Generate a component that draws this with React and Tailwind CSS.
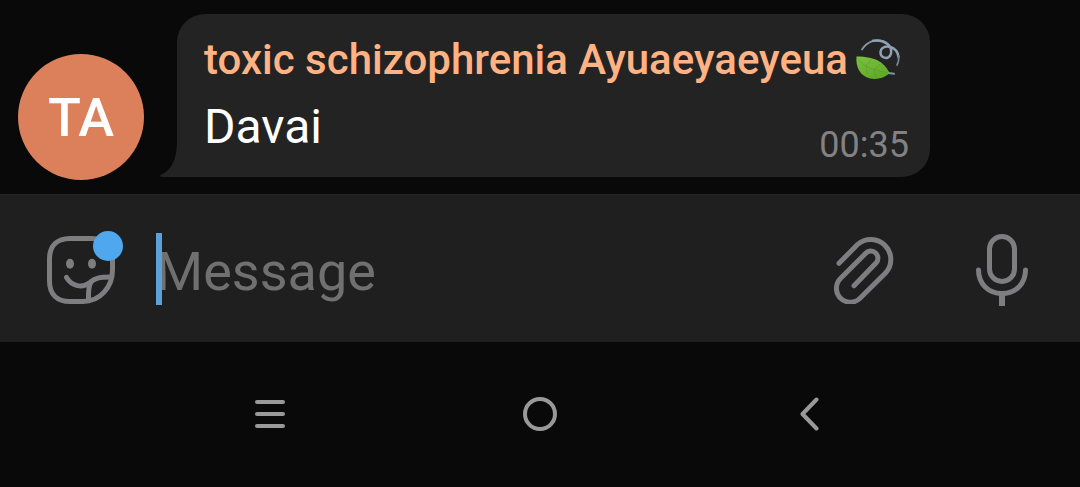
import { useState } from "react";

function LeafEmoji() {
  return (
    <svg viewBox="0 0 48 48" className="w-12 h-12 shrink-0" fill="none" role="img" aria-label="leaf fluttering in wind">
      <defs>
        <linearGradient id="leaf" x1="0" y1="0" x2="0.4" y2="1">
          <stop offset="0" stopColor="#7cc142" />
          <stop offset="1" stopColor="#62ab28" />
        </linearGradient>
      </defs>
      <path d="M8 13.500C13 5.500 22 2.500 29.500 5.500" stroke="#8797a6" strokeWidth="1.800" strokeLinecap="round" />
      <path
        d="M19 4.700C26 3.500 33 6 36 11C38.500 15.500 37 20 34 21.500C30.500 23 26.500 20.500 26.500 16.500C26.500 12 31 9.500 36.500 11C41 12.500 44 16.500 44.500 21"
        stroke="#8fa1b3"
        strokeWidth="2.500"
        strokeLinecap="round"
      />
      <path d="M44.500 20C45 23.500 44.500 26.500 43 29" stroke="#74828f" strokeWidth="1.800" strokeLinecap="round" />
      <path d="M2.500 20.500C12 20.500 20 22 25.500 25.500C31 29 33 32.500 35.500 37C31 42 23 43.800 16 42.500C6 40 1.500 31 2.500 20.500Z" fill="url(#leaf)" />
      <path d="M4 23C11 32 23 35 35 37M12 30L17 24M20 34L26 28M12 30L13 38M20 34L22 41" stroke="#559c25" strokeWidth="0.600" />
      <path d="M34.500 37L40 37.800" stroke="#7d9a92" strokeWidth="2" strokeLinecap="round" />
    </svg>
  );
}

function StickerIcon() {
  return (
    <svg viewBox="0 0 68 68" className="w-[68px] h-[68px]" fill="none" stroke="currentColor" strokeWidth="5" strokeLinecap="round" strokeLinejoin="round">
      <path d="M65.500 34V23C65.500 10 58 2.500 45 2.500H23C10 2.500 2.500 10 2.500 23V45C2.500 58 10 65.500 23 65.500H36C53 65.500 65.500 51 65.500 34Z" />
      <path d="M19.500 41.500C25 50.500 35 52.500 43 46.500C48 42 52 41 63.500 41" />
      <path d="M44 46C41 51 41.500 57 41.500 64" />
      <ellipse cx="23" cy="27.700" rx="4" ry="5" fill="currentColor" stroke="none" />
      <ellipse cx="45" cy="27.700" rx="4" ry="5" fill="currentColor" stroke="none" />
    </svg>
  );
}

function ClipIcon() {
  return (
    <svg viewBox="0 0 60 68" className="w-[60px] h-[68px]" fill="none" stroke="currentColor" strokeWidth="5" strokeLinecap="round">
      <path d="M5 27.300L23.500 8.500A20 20 0 0 1 51.500 37L26 62.300A13.800 13.800 0 0 1 6.700 42.300L31.700 17.300A7 7 0 0 1 42 27L20 49.700" />
    </svg>
  );
}

function MicIcon() {
  return (
    <svg viewBox="0 0 52 72" className="w-[52px] h-[72px]" fill="none" stroke="currentColor" strokeWidth="5" strokeLinecap="round">
      <rect x="13.500" y="2.500" width="25" height="45" rx="12.500" />
      <path d="M2.500 36C2.500 50 12.500 59.500 26 59.500C39.500 59.500 49.500 50 49.500 36" />
      <path d="M26 60V72" strokeWidth="6" strokeLinecap="butt" />
    </svg>
  );
}

function Message({ initials, name, text, time }) {
  return (
    <div className="flex items-end gap-[33px] pl-[18px] pr-4 py-[14px]">
      <div className="w-[126px] h-[126px] shrink-0 rounded-full bg-[#dc805c] flex items-center justify-center text-white text-[54px] font-medium">
        {initials}
      </div>

      <div className="relative mb-[3px] pl-[27px] pr-[21px] pt-[15px] pb-[14px] bg-[#232323] rounded-[28px] rounded-bl-none">
        {/* Bubble tail */}
        <svg viewBox="0 0 17 36" className="absolute right-full bottom-0 w-[17px] h-9" fill="#232323">
          <path d="M17 0C17 17 12 29 1.500 33.500C-0.500 34.500 0 36 2 36H17Z" />
        </svg>

        <div className="flex items-center gap-1.5 pr-[7px] text-[42px] leading-[62px] font-medium text-[#ffb283] whitespace-nowrap">
          <span>{name}</span>
          <LeafEmoji />
        </div>
        <div className="flex items-end justify-between">
          <p className="text-[48px] leading-[72px] text-white">{text}</p>
          <time className="text-[36px] leading-[36px] text-[#828282]">{time}</time>
        </div>
      </div>
    </div>
  );
}

function Composer() {
  const [message, setMessage] = useState("");

  return (
    <form
      onSubmit={(e) => e.preventDefault()}
      className="h-[148px] flex items-center pt-0.5 pl-[47px] pr-[52px] bg-[#1f1f1f] border-t border-[#242424] text-[#7e7e80]"
    >
      <button type="button" aria-label="Stickers" className="relative shrink-0">
        <StickerIcon />
        <span className="absolute -top-[5px] -right-2 w-[30px] h-[30px] rounded-full bg-[#4fa7ee]"></span>
      </button>

      <div className="relative flex-1 min-w-0 ml-[41px] mb-0.5">
        <input
          value={message}
          onChange={(e) => setMessage(e.target.value)}
          placeholder="Message"
          aria-label="Message"
          className="block w-full h-[72px] pt-1.5 bg-transparent outline-none text-[54px] text-white caret-[#5ca2da] placeholder:text-[#707070]"
        />
        {message === "" && <span className="absolute left-0 top-0 w-[6px] h-[72px] bg-[#5ca2da]"></span>}
      </div>

      <button type="button" aria-label="Attach file" className="shrink-0">
        <ClipIcon />
      </button>
      <button type="button" aria-label="Record voice message" className="shrink-0 ml-[82px]">
        <MicIcon />
      </button>
    </form>
  );
}

function NavBar() {
  return (
    <nav className="h-[144px] grid grid-cols-3 items-center justify-items-center px-[12.5%] text-[#999999]">
      <button aria-label="Recent apps" className="flex flex-col gap-2">
        <span className="w-[30px] h-1 rounded-full bg-current"></span>
        <span className="w-[30px] h-1 rounded-full bg-current"></span>
        <span className="w-[30px] h-1 rounded-full bg-current"></span>
      </button>
      <button aria-label="Home" className="w-[34px] h-[34px] rounded-full border-4 border-current"></button>
      <button aria-label="Back">
        <svg viewBox="0 0 20 34" className="w-5 h-[34px]" fill="none" stroke="currentColor" strokeWidth="4" strokeLinecap="round" strokeLinejoin="round">
          <path d="M16.500 2.500L2.500 17L16.500 31.500" />
        </svg>
      </button>
    </nav>
  );
}

function App() {
  return (
    <div className="min-h-screen bg-[#090909] font-['Roboto',sans-serif]">
      <Message initials="TA" name="toxic schizophrenia Ayuaeyaeyeua" text="Davai" time="00:35" />
      <Composer />
      <NavBar />
    </div>
  );
}

export default App;
